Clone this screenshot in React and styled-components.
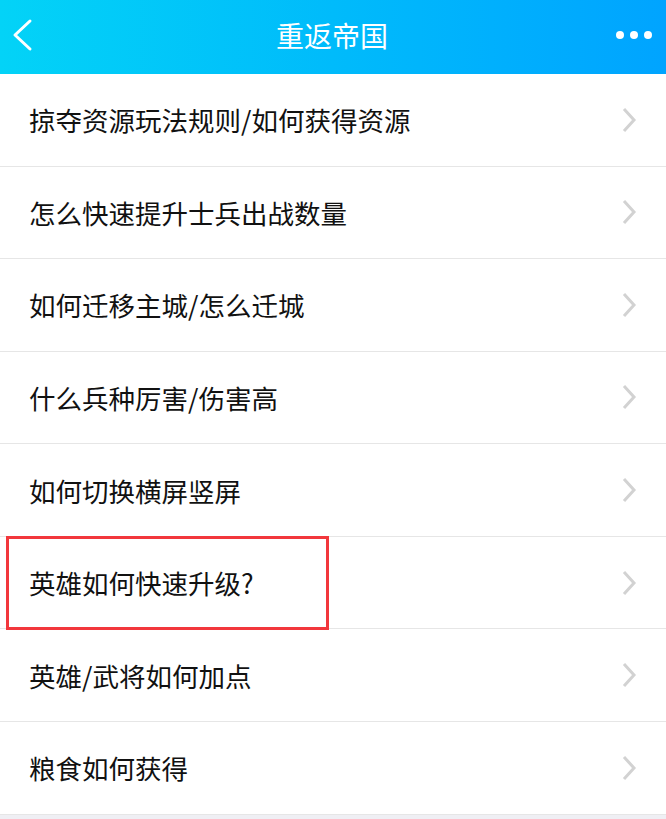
import React from 'react';
import styled, { createGlobalStyle } from 'styled-components';

const GlobalStyle = createGlobalStyle`
  html, body {
    margin: 0;
    padding: 0;
    background: #efeff4;
    font-family: "Noto Sans CJK SC", "Noto Sans", sans-serif;
  }
`;

const items = [
  '掠夺资源玩法规则/如何获得资源',
  '怎么快速提升士兵出战数量',
  '如何迁移主城/怎么迁城',
  '什么兵种厉害/伤害高',
  '如何切换横屏竖屏',
  '英雄如何快速升级?',
  '英雄/武将如何加点',
  '粮食如何获得',
];

function App() {
  return (
    <Page>
      <GlobalStyle />
      <Header>
        <BackButton aria-label='back'>
          <svg width='22' height='34' viewBox='0 0 22 34'>
            <path
              d='M18 3 L3 17 L18 31'
              fill='none'
              stroke='#fff'
              strokeWidth='3'
              strokeLinecap='round'
              strokeLinejoin='round'
            />
          </svg>
        </BackButton>
        <Title>重返帝国</Title>
        <MoreButton aria-label='more'>
          <Dot />
          <Dot />
          <Dot />
        </MoreButton>
      </Header>
      <List>
        {items.map((text, i) => (
          <Row key={text}>
            <RowText>{text}</RowText>
            <svg width='16' height='28' viewBox='0 0 16 28'>
              <path
                d='M3 3 L13 14 L3 25'
                fill='none'
                stroke='#d2d2d2'
                strokeWidth='3'
              />
            </svg>
            {i === 5 && <Highlight />}
          </Row>
        ))}
      </List>
    </Page>
  );
}

export default App;

const Page = styled.div`
  width: 666px;
  min-height: 819px;
  background: #efeff4;
`;

const Header = styled.header`
  height: 74px;
  display: flex;
  align-items: center;
  justify-content: space-between;
  padding: 0 14px 4px 12px;
  box-sizing: border-box;
  background: linear-gradient(90deg, #03d3f7 0%, #00bbfb 50%, #00a4ff 100%);
`;

const BackButton = styled.div`
  width: 40px;
  display: flex;
  align-items: center;
`;

const Title = styled.h1`
  margin: 0;
  font-size: 28px;
  font-weight: 400;
  color: #fff;
`;

const MoreButton = styled.div`
  width: 40px;
  display: flex;
  justify-content: flex-end;
  gap: 6px;
`;

const Dot = styled.span`
  width: 8px;
  height: 8px;
  border-radius: 50%;
  background: #fff;
`;

const List = styled.ul`
  list-style: none;
  margin: 0;
  padding: 0;
  background: #fff;
`;

const Row = styled.li`
  position: relative;
  height: 92.57px;
  box-sizing: border-box;
  display: flex;
  align-items: center;
  justify-content: space-between;
  padding: 0 29px 0 29px;
  border-bottom: 1.5px solid #e6e6e6;
`;

const RowText = styled.span`
  font-size: 26.5px;
  color: #111;
`;

const Highlight = styled.div`
  position: absolute;
  left: 6px;
  top: -1px;
  width: 323px;
  height: 94px;
  box-sizing: border-box;
  border: 3px solid #f2373c;
  pointer-events: none;
`;
